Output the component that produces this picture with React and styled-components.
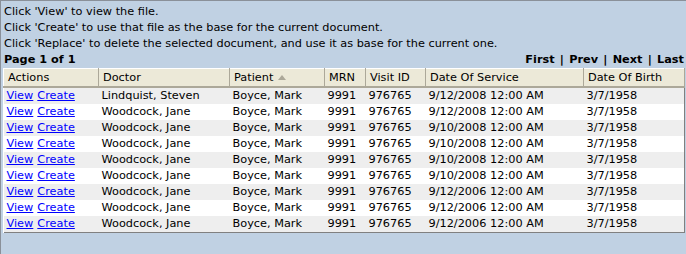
import React from "react";
import styled, { createGlobalStyle } from "styled-components";

const Global = createGlobalStyle`
  html, body { margin: 0; padding: 0; }
  body {
    background: #c0d1e3;
    font-family: "DejaVu Sans", Verdana, sans-serif;
    font-size: 11.3px;
    color: #000;
  }
`;

const Panel = styled.div`
  width: 686px;
  height: 254px;
  box-sizing: border-box;
  border-top: 1px solid #8a9099;
  border-left: 1px solid #8a9099;
  padding: 3px 0 0 2px;
  background: #c0d1e3;
`;

const Line = styled.div`
  height: 16px;
  line-height: 16px;
  padding-left: 1px;
  white-space: nowrap;
`;

const PagerBar = styled.div`
  display: flex;
  justify-content: space-between;
  align-items: center;
  height: 16px;
  line-height: 16px;
  width: 681px;
  font-weight: bold;
  padding-left: 1px;
  box-sizing: border-box;
`;

const Pager = styled.div`
  white-space: nowrap;
  word-spacing: 1.3px;
`;

const Table = styled.table`
  border-collapse: collapse;
  table-layout: fixed;
  width: 681px;
  background: #fff;
  border-right: 1px solid #808080;
  border-bottom: 1px solid #808080;
`;

const HeadCell = styled.th`
  width: ${(p) => p.$w}px;
  height: 18px;
  padding: 0 0 0 4px;
  box-sizing: border-box;
  text-align: left;
  font-weight: normal;
  background: #ece9d8;
  border-top: 1px solid #fff;
  border-left: 1px solid #fff;
  border-right: 1px solid #aca899;
  border-bottom: 2px solid #aca899;
  white-space: nowrap;
  overflow: hidden;
`;

const SortArrow = styled.span`
  display: inline-block;
  margin-left: 5px;
  width: 0;
  height: 0;
  border-left: 4px solid transparent;
  border-right: 4px solid transparent;
  border-bottom: 5px solid #aca899;
  vertical-align: 1px;
`;

const Row = styled.tr`
  background: ${(p) => (p.$alt ? "#eeeeee" : "#ffffff")};
`;

const Cell = styled.td`
  height: 16px;
  padding: 0 0 0 3px;
  white-space: nowrap;
  overflow: hidden;
`;

const Link = styled.a`
  color: #0000ff;
  text-decoration: underline;
  cursor: pointer;
  margin-right: 4px;
`;

const columns = [
  { label: "Actions", w: 95 },
  { label: "Doctor", w: 131 },
  { label: "Patient", w: 95, sorted: true },
  { label: "MRN", w: 41 },
  { label: "Visit ID", w: 60 },
  { label: "Date Of Service", w: 158 },
  { label: "Date Of Birth", w: 101 },
];

const rows = [
  ["Lindquist, Steven", "9/12/2008 12:00 AM"],
  ["Woodcock, Jane", "9/12/2008 12:00 AM"],
  ["Woodcock, Jane", "9/10/2008 12:00 AM"],
  ["Woodcock, Jane", "9/10/2008 12:00 AM"],
  ["Woodcock, Jane", "9/10/2008 12:00 AM"],
  ["Woodcock, Jane", "9/10/2008 12:00 AM"],
  ["Woodcock, Jane", "9/12/2006 12:00 AM"],
  ["Woodcock, Jane", "9/12/2006 12:00 AM"],
  ["Woodcock, Jane", "9/12/2006 12:00 AM"],
];

export default function App() {
  return (
    <>
      <Global />
      <Panel>
        <Line>Click 'View' to view the file.</Line>
        <Line>Click 'Create' to use that file as the base for the current document.</Line>
        <Line>Click 'Replace' to delete the selected document, and use it as base for the current one.</Line>
        <PagerBar>
          <span>Page 1 of 1</span>
          <Pager>First | Prev | Next | Last</Pager>
        </PagerBar>
        <Table>
          <thead>
            <tr>
              {columns.map((c) => (
                <HeadCell key={c.label} $w={c.w}>
                  {c.label}
                  {c.sorted && <SortArrow />}
                </HeadCell>
              ))}
            </tr>
          </thead>
          <tbody>
            {rows.map((r, i) => (
              <Row key={i} $alt={i % 2 === 0}>
                <Cell>
                  <Link>View</Link>
                  <Link>Create</Link>
                </Cell>
                <Cell>{r[0]}</Cell>
                <Cell>Boyce, Mark</Cell>
                <Cell>9991</Cell>
                <Cell>976765</Cell>
                <Cell>{r[1]}</Cell>
                <Cell>3/7/1958</Cell>
              </Row>
            ))}
          </tbody>
        </Table>
      </Panel>
    </>
  );
}
